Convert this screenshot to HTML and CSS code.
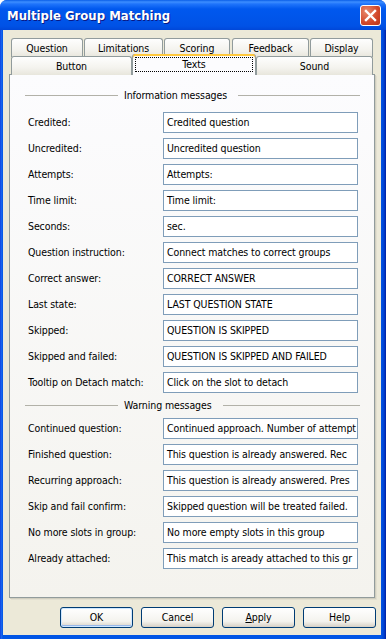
FILE: index.html
```html
<!DOCTYPE html>
<html lang="en-US">

<head>
    <meta charset="UTF-8">
    <meta name="viewport" content="width=device-width">
    <title>Multiple Group Matching</title>
    <link rel="stylesheet" href="styles.css">
</head>

<body>
    <div class="window">
        <div class="titlebar">
            <span class="caption">Multiple Group Matching</span>
            <div class="close">
                <svg width="13" height="13" viewBox="0 0 13 13">
                    <path d="M2 2 L11 11 M11 2 L2 11" stroke="#fff" stroke-width="2.4" stroke-linecap="square" />
                </svg>
            </div>
        </div>

        <div class="client">
            <div class="tabs">
                <div class="tabrow">
                    <div class="tab">Question</div>
                    <div class="tab">Limitations</div>
                    <div class="tab">Scoring</div>
                    <div class="tab">Feedback</div>
                    <div class="tab">Display</div>
                </div>
                <div class="tabrow second">
                    <div class="tab">Button</div>
                    <div class="tab selected"><span class="focus">Texts</span></div>
                    <div class="tab">Sound</div>
                </div>
            </div>

            <div class="panel">
                <div class="group first"><span>Information messages</span></div>
                <div class="row"><label>Credited:</label><div class="field">Credited question</div></div>
                <div class="row"><label>Uncredited:</label><div class="field">Uncredited question</div></div>
                <div class="row"><label>Attempts:</label><div class="field">Attempts:</div></div>
                <div class="row"><label>Time limit:</label><div class="field">Time limit:</div></div>
                <div class="row"><label>Seconds:</label><div class="field">sec.</div></div>
                <div class="row"><label>Question instruction:</label><div class="field">Connect matches to correct groups</div></div>
                <div class="row"><label>Correct answer:</label><div class="field">CORRECT ANSWER</div></div>
                <div class="row"><label>Last state:</label><div class="field">LAST QUESTION STATE</div></div>
                <div class="row"><label>Skipped:</label><div class="field">QUESTION IS SKIPPED</div></div>
                <div class="row"><label>Skipped and failed:</label><div class="field">QUESTION IS SKIPPED AND FAILED</div></div>
                <div class="row"><label>Tooltip on Detach match:</label><div class="field">Click on the slot to detach</div></div>

                <div class="group second"><span>Warning messages</span></div>
                <div class="row"><label>Continued question:</label><div class="field">Continued approach. Number of attempt</div></div>
                <div class="row"><label>Finished question:</label><div class="field">This question is already answered. Rec</div></div>
                <div class="row"><label>Recurring approach:</label><div class="field">This question is already answered. Pres</div></div>
                <div class="row"><label>Skip and fail confirm:</label><div class="field">Skipped question will be treated failed.</div></div>
                <div class="row"><label>No more slots in group:</label><div class="field">No more empty slots in this group</div></div>
                <div class="row"><label>Already attached:</label><div class="field">This match is aready attached to this gr</div></div>
            </div>

            <div class="buttons">
                <div class="btn default">OK</div>
                <div class="btn">Cancel</div>
                <div class="btn"><u>A</u>pply</div>
                <div class="btn">Help</div>
            </div>
        </div>
    </div>
</body>

</html>
```
FILE: styles.css
```css
body {
    margin: 0;
    background: #fff;
    font-family: "DejaVu Sans Condensed", "DejaVu Sans", sans-serif;
    font-stretch: condensed;
    font-size: 10.5px;
    letter-spacing: -0.1px;
    color: #000;
}

.window {
    width: 386px;
    height: 639px;
    box-sizing: border-box;
    display: flex;
    flex-direction: column;
    background: linear-gradient(to right, #0831d9 0px, #1e68f0 1px, #0055e5 3px, #0055e5 381px, #0040d0 384px, #001ea0 386px);
    border-radius: 7px 7px 0 0;
    overflow: hidden;
}

.titlebar {
    height: 30px;
    flex: none;
    display: flex;
    align-items: center;
    justify-content: space-between;
    padding: 0 5px 0 7px;
    background: linear-gradient(to bottom, #0a5ee8 0px, #3d8eff 2px, #1f74fb 4px, #0058ee 9px, #0055ea 18px, #0052e6 26px, #0047d8 30px);
}

.caption {
    color: #fff;
    font-weight: bold;
    font-size: 13px;
    letter-spacing: 0;
    text-shadow: 1px 1px 0 #0a1883;
    margin-top: 1px;
}

.close {
    width: 19px;
    height: 19px;
    border: 1px solid #fff;
    border-radius: 3px;
    background: radial-gradient(circle at 30% 30%, #e98a6c, #d1472a 60%, #b8361a);
    display: flex;
    align-items: center;
    justify-content: center;
    margin-top: 1px;
}

.client {
    flex: 1;
    margin: 0 5px 4px 3px;
    background: #ece9d8;
    padding-top: 8px;
}

.tabs {
    padding-left: 8px;
}

.tabrow {
    display: flex;
    gap: 1px;
    height: 18px;
}

.tabrow.second {
    gap: 0;
}

.tab {
    box-sizing: border-box;
    height: 19px;
    border: 1px solid #919b9c;
    border-bottom: none;
    border-radius: 3px 3px 0 0;
    background: linear-gradient(to bottom, #fefefe, #f4f3ee 60%, #e8e6dc);
    text-align: center;
    line-height: 18px;
}

.tabrow .tab:nth-child(1) { width: 72px; }
.tabrow .tab:nth-child(2) { width: 79px; }
.tabrow .tab:nth-child(3) { width: 66px; margin-right: 1px; }
.tabrow .tab:nth-child(4) { width: 77px; }
.tabrow .tab:nth-child(5) { width: 63px; }

.tabrow.second .tab:nth-child(1) { width: 121px; margin-right: 0; }
.tabrow.second .tab:nth-child(2) { width: 124px; margin-right: 0; }
.tabrow.second .tab:nth-child(3) { width: 117px; }

.tab.selected {
    position: relative;
    z-index: 1;
    height: 21px;
    margin-top: -2px;
    background: #fcfcfe;
    border-top: none;
    box-shadow: inset 0 2px 0 #ffc83c, inset 0 1px 0 #e68b2c;
    padding: 3px 2px 0;
}

.focus {
    display: block;
    height: 15px;
    outline: 1px dotted #000;
    outline-offset: -1px;
    line-height: 15px;
}

.panel {
    box-sizing: border-box;
    width: 366px;
    height: 524px;
    margin-left: 6px;
    border: 1px solid #919b9c;
    background: linear-gradient(to bottom, #fcfcfe, #f4f3ee);
    box-shadow: 1px 1px 0 #d0cebf, 2px 2px 0 #e2dfd0;
    padding: 0 15px 0 18px;
}

.group {
    display: flex;
    align-items: center;
    height: 14px;
    margin-left: -3px;
    margin-right: -1px;
}

.group.first {
    margin-top: 13px;
    margin-bottom: 10px;
}

.group.second {
    margin-top: 4px;
    margin-bottom: 6px;
}

.group::before {
    content: "";
    width: 93px;
    border-top: 1px solid #b2b1a8;
    margin-right: 6px;
}

.group::after {
    content: "";
    flex: 1;
    border-top: 1px solid #b2b1a8;
    margin-left: 11px;
}

.row {
    display: flex;
    align-items: center;
    height: 21px;
    margin-bottom: 5px;
}

.row label {
    width: 135px;
    flex: none;
    margin-top: -2px;
}

.field {
    box-sizing: border-box;
    width: 195px;
    height: 21px;
    border: 1px solid #7f9db9;
    background: #fff;
    padding: 0 2px 0 3px;
    line-height: 19px;
    white-space: nowrap;
    overflow: hidden;
}

.buttons {
    display: flex;
    justify-content: flex-end;
    gap: 8px;
    margin-top: 9px;
    padding-right: 5px;
}

.btn {
    box-sizing: border-box;
    width: 73px;
    height: 21px;
    border: 1px solid #003c74;
    border-radius: 3px;
    background: linear-gradient(to bottom, #ffffff, #f4f3ee 70%, #d6d0c5);
    text-align: center;
    line-height: 19px;
}

.btn.default {
    box-shadow: inset 0 0 0 1px #cee7ff, inset 0 -1px 0 1px #98b8ea;
}
```
